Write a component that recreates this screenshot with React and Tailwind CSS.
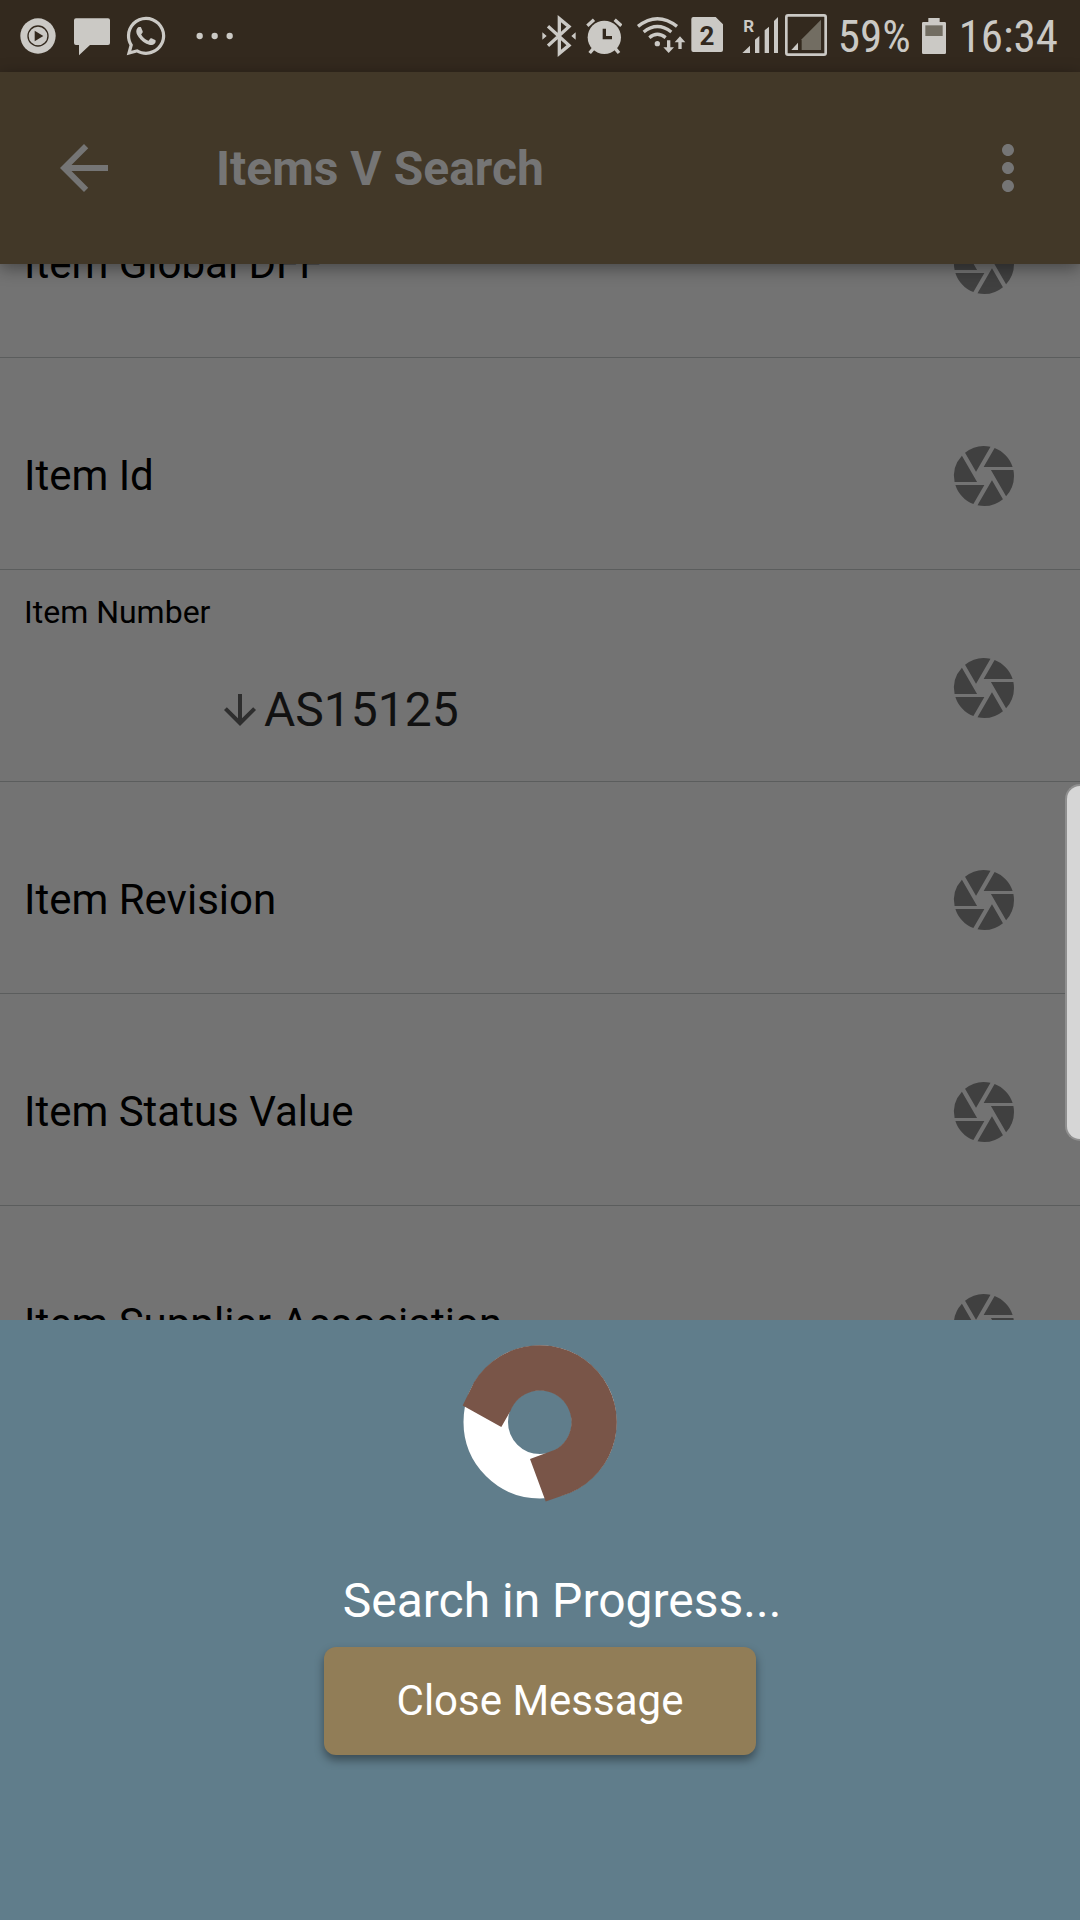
import React from "react";
import { MdArrowBack, MdMoreVert, MdCamera, MdArrowDownward } from "react-icons/md";
import { FaWhatsapp } from "react-icons/fa";

function Glyph({ x, w, className, children }) {
  return (
    <svg
      aria-hidden="true"
      viewBox={`${x} 42 ${w} 132`}
      height={44}
      width={w / 3}
      fill="#cbc9c5"
      className={"shrink-0 " + (className || "")}
    >
      {children}
    </svg>
  );
}

function StatusBar() {
  return (
    <div className="flex h-[72px] shrink-0 items-center justify-between bg-[#33291e] pr-[22px] pl-5 text-[#cbc9c5]">
      <div className="flex items-center">
        <Glyph x={60} w={108}>
          <circle cx="114" cy="108" r="53" />
          <circle cx="114" cy="108" r="30" fill="none" stroke="#33291e" strokeWidth="4" />
          <path d="M104 92 L130 108 L104 124Z" fill="#33291e" />
        </Glyph>
        <Glyph x={222} w={108} className="ml-[18px]">
          <path d="M228 55 H324 Q330 55 330 61 V129 Q330 135 324 135 H270 L237 166 V135 H228 Q222 135 222 129 V61 Q222 55 228 55Z" />
        </Glyph>
        <FaWhatsapp className="ml-[14px] size-11" aria-hidden="true" />
        <Glyph x={588} w={114} className="ml-7">
          <circle cx="599" cy="108" r="9.5" />
          <circle cx="644" cy="108" r="9.5" />
          <circle cx="689" cy="108" r="9.5" />
        </Glyph>
      </div>
      <div className="flex items-center">
        <Glyph x={36} w={102}>
          <path
            d="M54 79 L117 136 L88 160 V56 L117 80 L54 137"
            fill="none"
            stroke="#cbc9c5"
            strokeWidth="10"
          />
          <path d="M37 97 L50 108 L37 119Z M137 97 L124 108 L137 119Z" />
        </Glyph>
        <Glyph x={170} w={108} className="ml-[10px]">
          <circle cx="225" cy="112" r="50" />
          <path
            d="M174 77 L194 59 M276 77 L256 59 M192 146 L181 159 M258 146 L269 159"
            fill="none"
            stroke="#cbc9c5"
            strokeWidth="10"
          />
          <path d="M225 86 V113 H248" fill="none" stroke="#33291e" strokeWidth="10" />
        </Glyph>
        <Glyph x={318} w={150} className="ml-[14px]">
          <path
            d="M324 79 Q382 33 441 79 M341 96 Q382 63 424 96 M358 113 Q382 93 407 113"
            fill="none"
            stroke="#cbc9c5"
            strokeWidth="10"
          />
          <circle cx="382" cy="131" r="8" />
          <path d="M411 121 H421 V142 H432 L416 159 L400 142 H411Z M445 147 V127 H434 L450 109 L466 127 H455 V147Z" />
        </Glyph>
        <svg
          aria-label="SIM 2"
          role="img"
          viewBox="483 42 96 132"
          width="32"
          height="44"
          className="ml-[5px] shrink-0"
        >
          <path
            d="M490 51 H557 L579 73 V150 Q579 156 573 156 H490 Q484 156 484 150 V57 Q484 51 490 51Z"
            fill="#cbc9c5"
          />
          <text x="531" y="135" textAnchor="middle" fontSize="78" fontWeight="700" fontFamily="Roboto, sans-serif" fill="#33291e">
            2
          </text>
        </svg>
        <Glyph x={636} w={108} className="ml-[19px]">
          <text x="640" y="97" fontSize="51" fontWeight="700" fontFamily="Roboto, sans-serif">
            R
          </text>
          <path d="M637 159 L660 137 V159Z M675 159 V119 L688 108 V159Z M704 159 V91 L717 80 V159Z M732 159 V63 L744 51 V159Z" />
        </Glyph>
        <Glyph x={765} w={126} className="ml-[7px]">
          <rect x="769" y="46" width="118" height="118" rx="5" fill="none" stroke="#cbc9c5" strokeWidth="8" />
          <path d="M784 150 L804 128 V150Z" />
          <path d="M815 150 V118 L873 59 V150Z" fill="#726d62" />
        </Glyph>
        <span className="ml-[11px] pt-0.5 font-['Roboto_Condensed','Liberation_Sans_Narrow',Roboto,sans-serif] text-[45px] leading-[56px]">
          59%
        </span>
        <Glyph x={366} w={72} className="ml-[11px]">
          <path d="M385 54 H419 V66 H434 Q438 66 438 70 V158 Q438 162 434 162 H370 Q366 162 366 158 V70 Q366 66 370 66 H385Z" />
          <path d="M376 76 H428 V108 H376Z" fill="#726d62" />
        </Glyph>
        <span className="ml-[13px] pt-0.5 font-['Roboto_Condensed','Liberation_Sans_Narrow',Roboto,sans-serif] text-[45px] leading-[56px]">
          16:34
        </span>
      </div>
    </div>
  );
}

function AppHeader() {
  return (
    <header className="relative z-10 flex h-48 shrink-0 items-center bg-[#423828] pr-9 pl-12 text-[#757575] shadow-[0_4px_16px_rgba(0,0,0,0.4)]">
      <button type="button" aria-label="Back">
        <MdArrowBack className="size-[72px]" />
      </button>
      <h1 className="ml-24 flex-1 pt-0.5 text-[48px] leading-[56px] font-bold">Items V Search</h1>
      <button type="button" aria-label="More options">
        <MdMoreVert className="size-[72px]" />
      </button>
    </header>
  );
}

const FIELDS = [
  { id: "item-global-dff", label: "Item Global DFF" },
  { id: "item-id", label: "Item Id" },
  { id: "item-number", label: "Item Number", value: "AS15125" },
  { id: "item-revision", label: "Item Revision" },
  { id: "item-status-value", label: "Item Status Value" },
  { id: "item-supplier-association", label: "Item Supplier Association" },
];

function FieldRow({ id, label, value }) {
  return (
    <li className="flex h-[212px] shrink-0 border-b border-[#5b5d5d] pr-[60px] pl-6">
      {value ? (
        <div className="flex min-w-0 flex-1 flex-col pt-6">
          <label htmlFor={id} className="text-[32px] leading-9 text-black">
            {label}
          </label>
          <div className="mt-[52px] ml-48 flex items-center">
            <MdArrowDownward className="size-12 shrink-0 text-[#2e2e2e]" aria-hidden="true" />
            <input
              id={id}
              type="text"
              defaultValue={value}
              className="h-14 min-w-0 flex-1 bg-transparent text-[48px] leading-[56px] text-[#111111] outline-none"
            />
          </div>
        </div>
      ) : (
        <div className="flex min-w-0 flex-1 items-center gap-4 pt-6">
          <label htmlFor={id} className="text-[42px] leading-[56px] whitespace-nowrap text-black">
            {label}
          </label>
          <input id={id} type="text" className="h-14 min-w-0 flex-1 bg-transparent text-[42px] outline-none" />
        </div>
      )}
      <button type="button" aria-label={`Scan ${label}`} className="pt-6 text-[#404040]">
        <MdCamera className="size-[72px]" />
      </button>
    </li>
  );
}

function Spinner() {
  return (
    <svg role="img" aria-label="Loading" viewBox="0 0 160 160" className="size-40">
      <circle cx="80" cy="80" r="54.25" fill="none" stroke="#ffffff" strokeWidth="44.5" />
      <path
        d="M2.7 63.5 L14 40.2 A77 77 0 1 1 110 151 L85.7 159.5 L70 117 L95 107.8 A31.5 31.5 0 1 0 50.5 69 L41.3 85Z"
        fill="#795548"
      />
    </svg>
  );
}

function ProgressSheet() {
  return (
    <section className="relative z-20 flex shrink-0 flex-col items-center bg-[#607d8b] pt-[22px] pb-[165px] text-white">
      <Spinner />
      <p className="mt-[71px] pl-11 text-[48px] leading-[56px]">Search in Progress...</p>
      <button
        type="button"
        className="mt-[18px] h-[108px] rounded-xl bg-[#917d57] px-[73px] text-[42px] leading-[56px] shadow-[0_5px_10px_rgba(0,0,0,0.4)]"
      >
        Close Message
      </button>
    </section>
  );
}

export default function App() {
  return (
    <div className="relative flex h-screen flex-col overflow-hidden bg-[#737373] font-[Roboto,sans-serif]">
      <StatusBar />
      <AppHeader />
      <main className="min-h-0 flex-1 overflow-hidden">
        <ul className="-mt-[118px] flex flex-col">
          {FIELDS.map((field) => (
            <FieldRow key={field.id} {...field} />
          ))}
        </ul>
      </main>
      <ProgressSheet />
      <div className="absolute top-[784px] right-0 z-30 h-[357px] w-[15px] rounded-l-2xl border-2 border-r-0 border-[#8f8f8f] bg-[#d6d6d6]" />
    </div>
  );
}
